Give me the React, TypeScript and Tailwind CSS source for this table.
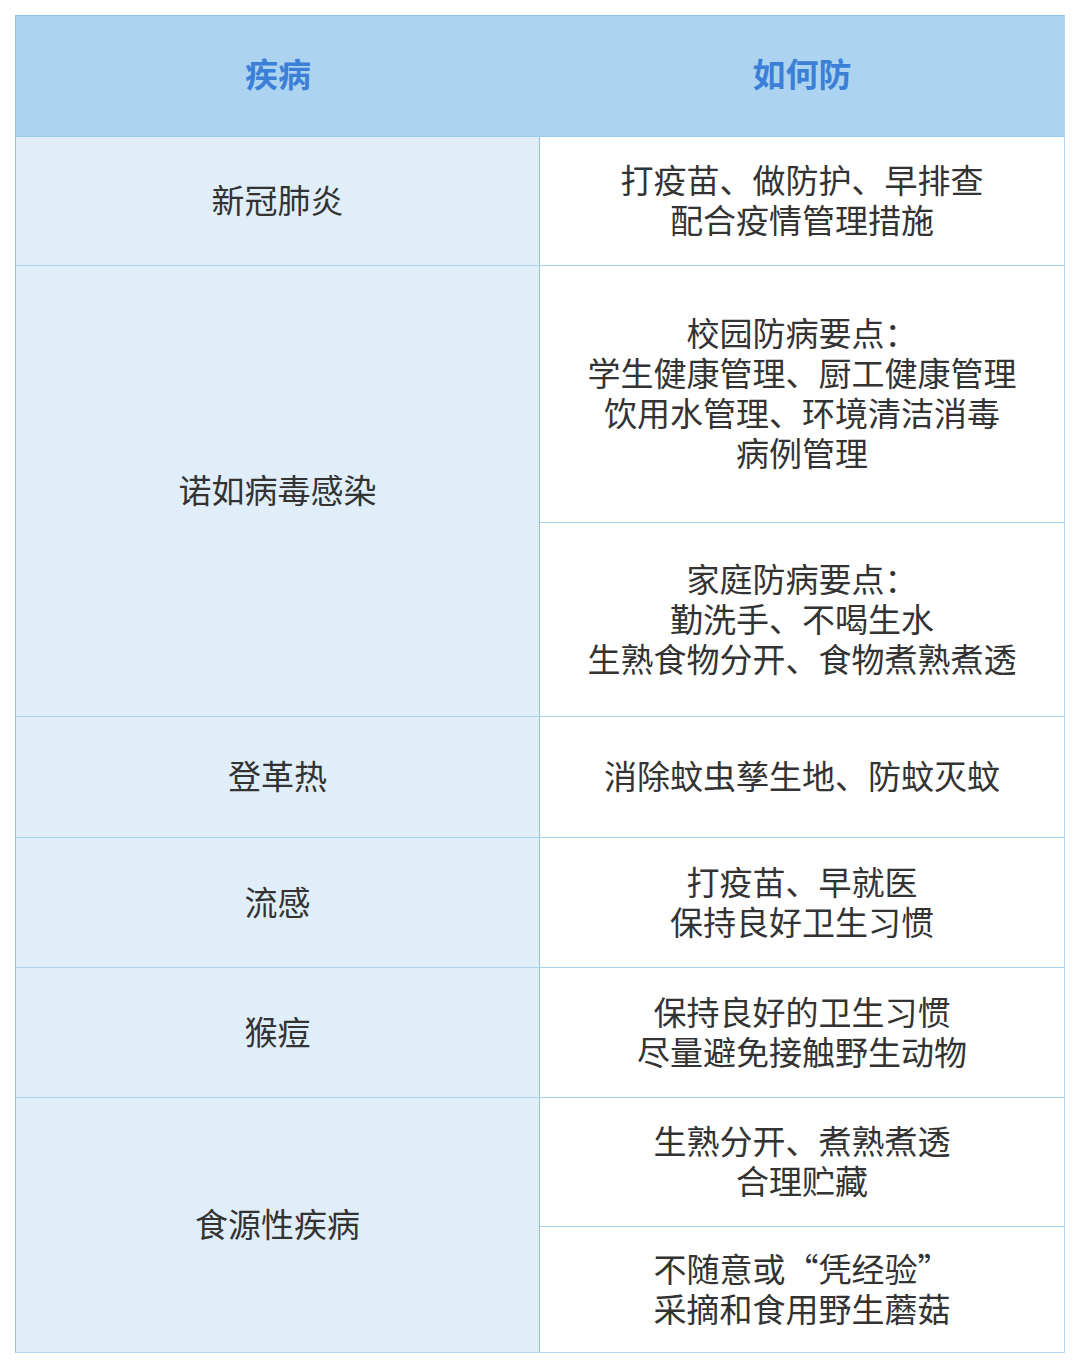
const font = { fontFamily: '"Noto Sans CJK SC", "Noto Sans", sans-serif' };

type Row = { disease: string; tips: string[][] };

const rows: Row[] = [
  { disease: "新冠肺炎", tips: [["打疫苗、做防护、早排查", "配合疫情管理措施"]] },
  {
    disease: "诺如病毒感染",
    tips: [
      ["校园防病要点：", "学生健康管理、厨工健康管理", "饮用水管理、环境清洁消毒", "病例管理"],
      ["家庭防病要点：", "勤洗手、不喝生水", "生熟食物分开、食物煮熟煮透"],
    ],
  },
  { disease: "登革热", tips: [["消除蚊虫孳生地、防蚊灭蚊"]] },
  { disease: "流感", tips: [["打疫苗、早就医", "保持良好卫生习惯"]] },
  { disease: "猴痘", tips: [["保持良好的卫生习惯", "尽量避免接触野生动物"]] },
  {
    disease: "食源性疾病",
    tips: [["生熟分开、煮熟煮透", "合理贮藏"], ["不随意或“凭经验”", "采摘和食用野生蘑菇"]],
  },
];

// heights of each right-hand cell, top to bottom
const heights = [129, 257, 194, 121, 130, 130, 129, 126];

export default function App() {
  let k = 0;
  return (
    <div className="bg-white pt-[15px] pb-[18px] px-[15px]" style={font}>
      <div className="border-t border-l border-[#93c5ea] border-r-[#b4d9f2] border-r border-b border-b-[#b4d9f2]">
        <div className="grid grid-cols-2 h-[121px] bg-[#acd4f1] border-b border-[#9ccbee] pb-[5px]">
          <div className="flex items-center justify-center text-[33px] font-bold text-[#3b7fd6]">疾病</div>
          <div className="flex items-center justify-center text-[33px] font-bold text-[#3b7fd6]">如何防</div>
        </div>
        {rows.map((r, i) => {
          const last = i === rows.length - 1;
          return (
            <div key={r.disease} className={`grid grid-cols-2 ${last ? "" : "border-b border-[#a9d2ef]"}`}>
              <div className="flex items-center justify-center bg-[#e0eefa] border-r border-[#8fc2e8] pb-[4px] text-[33px] leading-[40px] text-[#333333]">
                {r.disease}
              </div>
              <div className="flex flex-col">
                {r.tips.map((t, j) => {
                  const h = heights[k++] - (j === r.tips.length - 1 ? 1 : 0);
                  return (
                    <div
                      key={j}
                      className={`flex flex-col items-center justify-center pb-[4px] text-center text-[33px] leading-[40px] text-[#333333] ${
                        j < r.tips.length - 1 ? "border-b border-[#a9d2ef]" : ""
                      }`}
                      style={{ height: h }}
                    >
                      {t.map((line) => (
                        <div key={line}>{line}</div>
                      ))}
                    </div>
                  );
                })}
              </div>
            </div>
          );
        })}
      </div>
    </div>
  );
}
